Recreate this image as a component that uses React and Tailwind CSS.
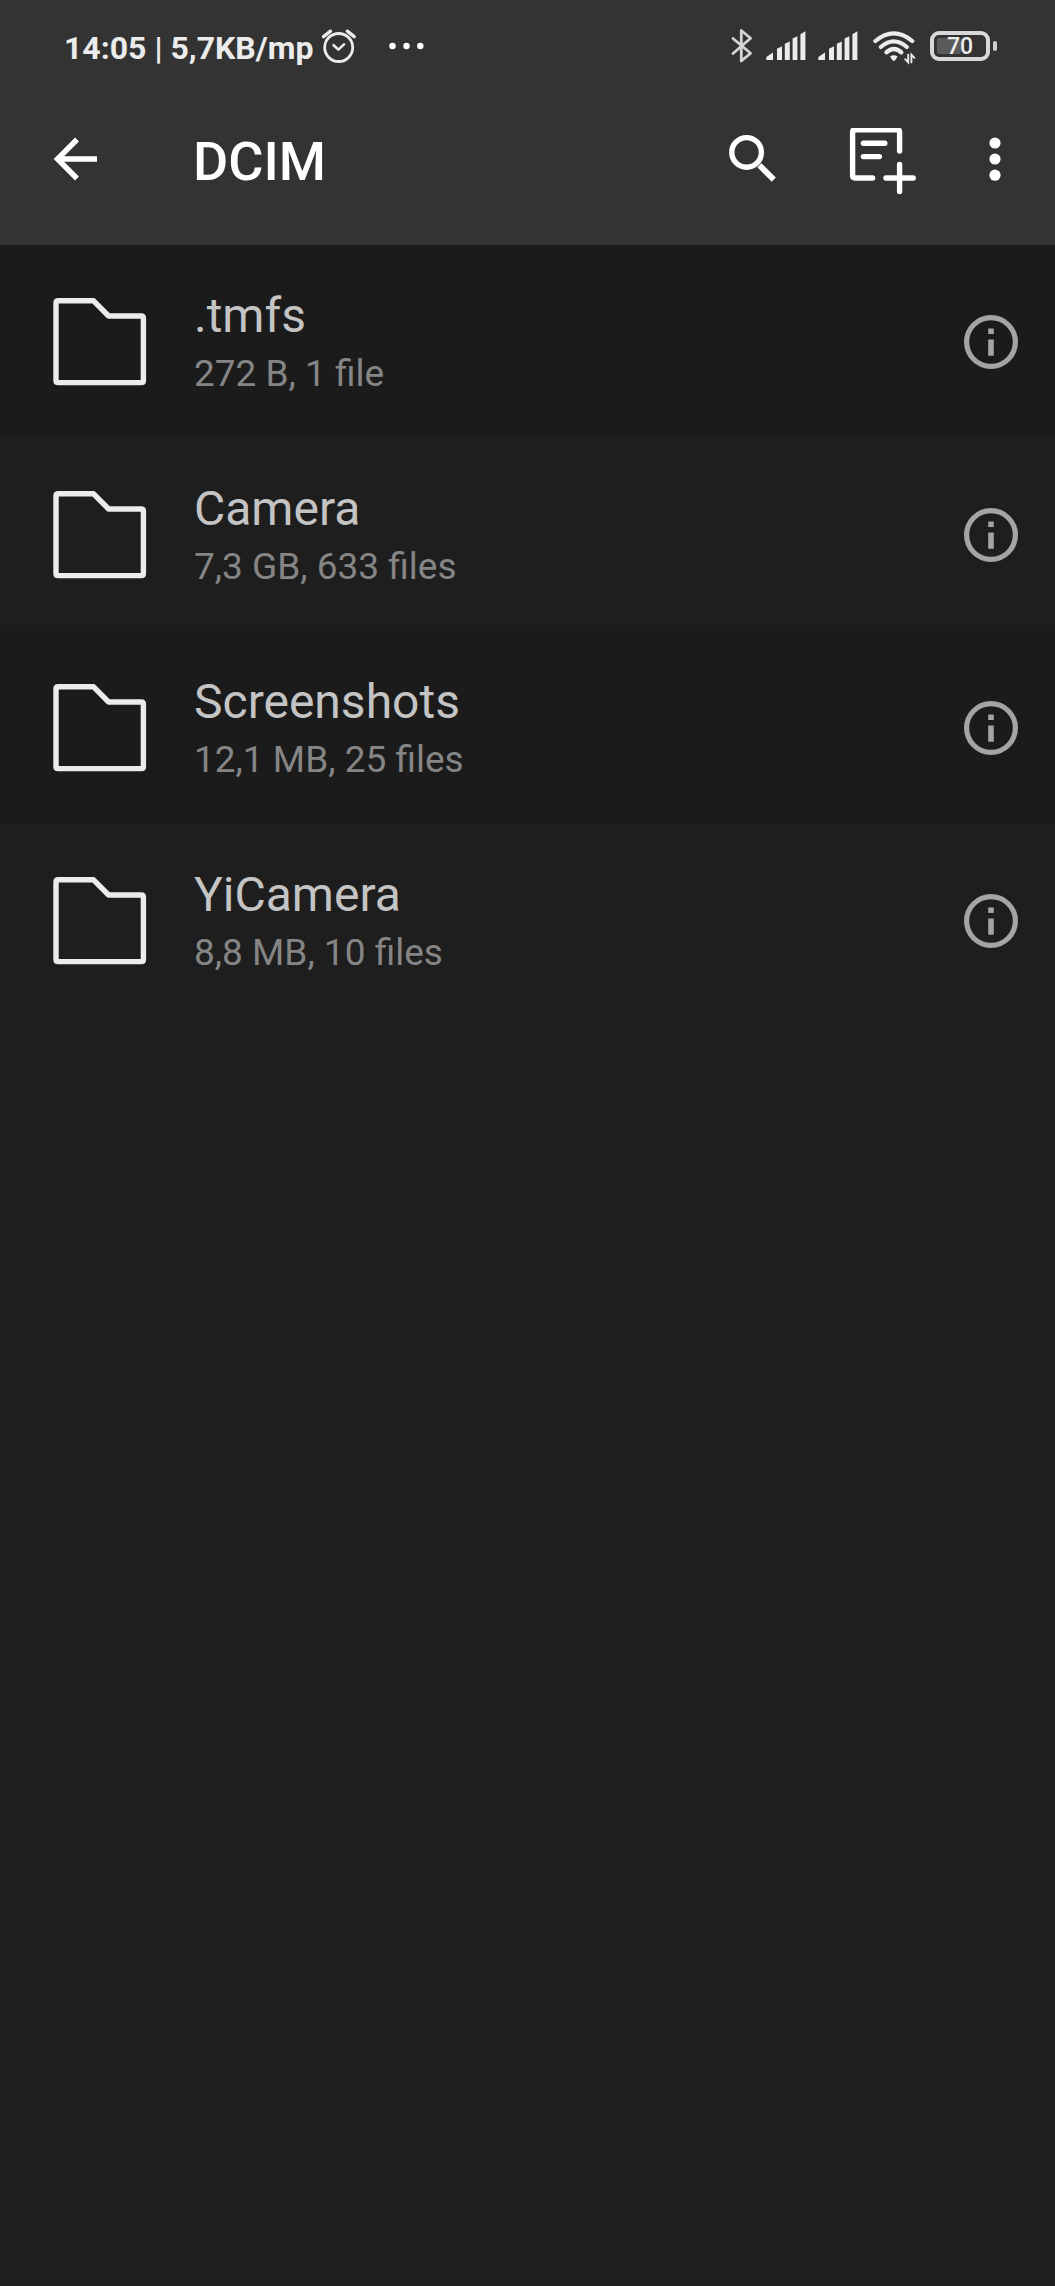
import React from 'react';

const folders = [
  { name: '.tmfs', details: '272 B, 1 file' },
  { name: 'Camera', details: '7,3 GB, 633 files' },
  { name: 'Screenshots', details: '12,1 MB, 25 files' },
  { name: 'YiCamera', details: '8,8 MB, 10 files' },
];

const AlarmIcon = () => (
  <svg className="w-9 h-10 ml-2" viewBox="320 28 36 40" fill="none" stroke="#ececec" strokeWidth="3" strokeLinecap="round" strokeLinejoin="round">
    <circle cx="337.7" cy="47.5" r="14" strokeWidth="2.8" />
    <path d="M322.5 36.6L329.5 31.2M346.3 31.2L353.2 36.6" strokeWidth="3.4" />
    <path d="M332.6 45.2L337.4 49.6L343 44.4" strokeWidth="2.6" />
  </svg>
);

const DotsIcon = () => (
  <svg className="w-9 h-10 ml-8" viewBox="388 28 36 40" fill="#fff">
    <circle cx="391.5" cy="46" r="3.2" />
    <circle cx="405.5" cy="46" r="3.2" />
    <circle cx="419.3" cy="46" r="3.2" />
  </svg>
);

const BluetoothIcon = () => (
  <svg className="w-6 h-10" viewBox="730 28 24 40" fill="none" stroke="#d4d4d4" strokeWidth="2.8" strokeLinecap="round" strokeLinejoin="round">
    <path d="M733 38.5L750.6 53.2L741.3 61V30.5L750.6 38.3L733 53.5" />
  </svg>
);

const SignalIcon = () => (
  <svg className="w-10 h-10 ml-3" viewBox="0 28 40 40" fill="#ececec">
    <path d="M0.5 60Q-0.6 57.6 1.5 56.2L7 52.6V60Z" />
    <path d="M11 60V48.8L16 46.2V60Z" />
    <path d="M18.8 60V43.8L23.8 41.4V60Z" />
    <path d="M26.6 60V38.6L31.4 36.2V60Z" />
    <path d="M34.4 60V34.2L39.4 31.2V60Z" />
  </svg>
);

const WifiIcon = () => (
  <svg className="w-11 h-10 ml-3.5" viewBox="872 28 44 40" fill="none" stroke="#ececec" strokeWidth="4.2" strokeLinecap="round">
    <path d="M875.4 41Q893.8 25.8 912.2 41" />
    <path d="M880.8 47Q893.8 35.8 906.8 47" />
    <path d="M886.4 52.4Q893.8 45.6 901.4 52.4" />
    <path d="M890 56.5Q893.8 53.8 897.6 56.5L895.2 60.2Q893.8 61.2 892.4 60.2Z" fill="#ececec" stroke="none" />
    <path d="M908.2 54.6V62.4L905.2 59.2M911.4 62.4V54.6L914.4 57.8" strokeWidth="1.9" />
  </svg>
);

const Battery = () => (
  <div className="flex items-center ml-3.5 -translate-y-0.5">
    <div className="w-[60px] h-[30px] rounded-[9px] border-4 border-[#d8d8d8] flex items-center relative">
      <div className="absolute left-[3px] top-[3px] w-6 h-4 rounded-[2px] bg-[#5a5a5a]" />
      <span className="relative w-full pt-0.5 text-center text-[23px] leading-[22px] font-medium">70</span>
    </div>
    <div className="w-1 h-2.5 ml-[3px] rounded-full bg-[#d0d0d0]" />
  </div>
);

const BackIcon = () => (
  <svg className="w-12 h-[68px]" viewBox="52 128 48 68" fill="none" stroke="#fff" strokeWidth="5.4">
    <path d="M97 159H58M77 139.5L57.5 159L77 178.5" />
  </svg>
);

const SearchIcon = () => (
  <svg className="w-12 h-[68px]" viewBox="728 128 48 68" fill="none" stroke="#fff" strokeWidth="5.4">
    <circle cx="746.6" cy="152.4" r="14.8" />
    <path d="M759.4 165.2L773.8 179.6" strokeWidth="5.8" />
  </svg>
);

const AddNoteIcon = () => (
  <svg className="w-[68px] h-[68px]" viewBox="849 128 68 68" fill="none" stroke="#fff" strokeWidth="5.4" strokeLinecap="round" strokeLinejoin="round">
    <path d="M872.6 178H855Q852.6 178 852.6 175.6V132Q852.6 129.7 855 129.7H897.2Q899.6 129.7 899.6 132V151" />
    <path d="M863.4 143.2H884.8M863.4 156.6H879.4" />
    <path d="M899.6 164.4V191.6M886 178H913.2" />
  </svg>
);

const MoreIcon = () => (
  <svg className="w-3 h-[68px]" viewBox="989 128 12 68" fill="#fff">
    <circle cx="995" cy="143" r="5.6" />
    <circle cx="995" cy="159" r="5.6" />
    <circle cx="995" cy="175.2" r="5.6" />
  </svg>
);

const FolderIcon = () => (
  <svg className="w-[94px] h-[90px] shrink-0" viewBox="0 0 94 90" fill="none" stroke="#ececec" strokeWidth="5.4" strokeLinejoin="round">
    <path d="M3 6Q3 3.8 5.2 3.8H40.6L55.6 19H88.2Q90.4 19 90.4 21.2V83.4Q90.4 85.6 88.2 85.6H5.2Q3 85.6 3 83.4Z" />
  </svg>
);

const InfoIcon = () => (
  <svg className="w-14 h-14" viewBox="0 0 56 56">
    <circle cx="28" cy="28" r="24.4" fill="none" stroke="#a4a4a4" strokeWidth="5.2" />
    <path d="M25.2 14.4H30.8V20H25.2ZM25.2 25.4H30.8V41.8H25.2Z" fill="#a4a4a4" />
  </svg>
);

const App = () => {
  return (
    <div className="min-h-screen bg-[#1e1e1e] font-[Roboto,sans-serif] text-white">
      <header className="bg-[#333333]">
        <div className="flex items-center justify-between h-24 pl-16 pr-[58px] text-[#ececec]">
          <div className="flex items-center">
            <span className="text-[32px] leading-10 font-bold">14:05 | 5,7KB/mp</span>
            <AlarmIcon />
            <DotsIcon />
          </div>
          <div className="flex items-center">
            <BluetoothIcon />
            <SignalIcon />
            <SignalIcon />
            <WifiIcon />
            <Battery />
          </div>
        </div>
        <div className="flex items-center pt-8 pb-[49px] pl-[52px] pr-[54px]">
          <button aria-label="Back" className="w-[141px] shrink-0">
            <BackIcon />
          </button>
          <h1 className="flex-1 text-[54px] leading-[64px] font-medium">DCIM</h1>
          <button aria-label="Search"><SearchIcon /></button>
          <button aria-label="New folder" className="ml-[73px]"><AddNoteIcon /></button>
          <button aria-label="More options" className="ml-[72px]"><MoreIcon /></button>
        </div>
      </header>

      <ul>
        {folders.map(folder => (
          <li key={folder.name} className="flex items-center h-[193px] pl-[53px] pr-9 odd:bg-[#1b1b1b]">
            <FolderIcon />
            <div className="flex-1 ml-[47px]">
              <p className="text-[48px] leading-[56px] text-[#c4c4c4]">{folder.name}</p>
              <p className="mt-2 text-[37px] leading-[44px] text-[#858585]">{folder.details}</p>
            </div>
            <button aria-label={`Details of ${folder.name}`}><InfoIcon /></button>
          </li>
        ))}
      </ul>
    </div>
  );
};

export default App;
